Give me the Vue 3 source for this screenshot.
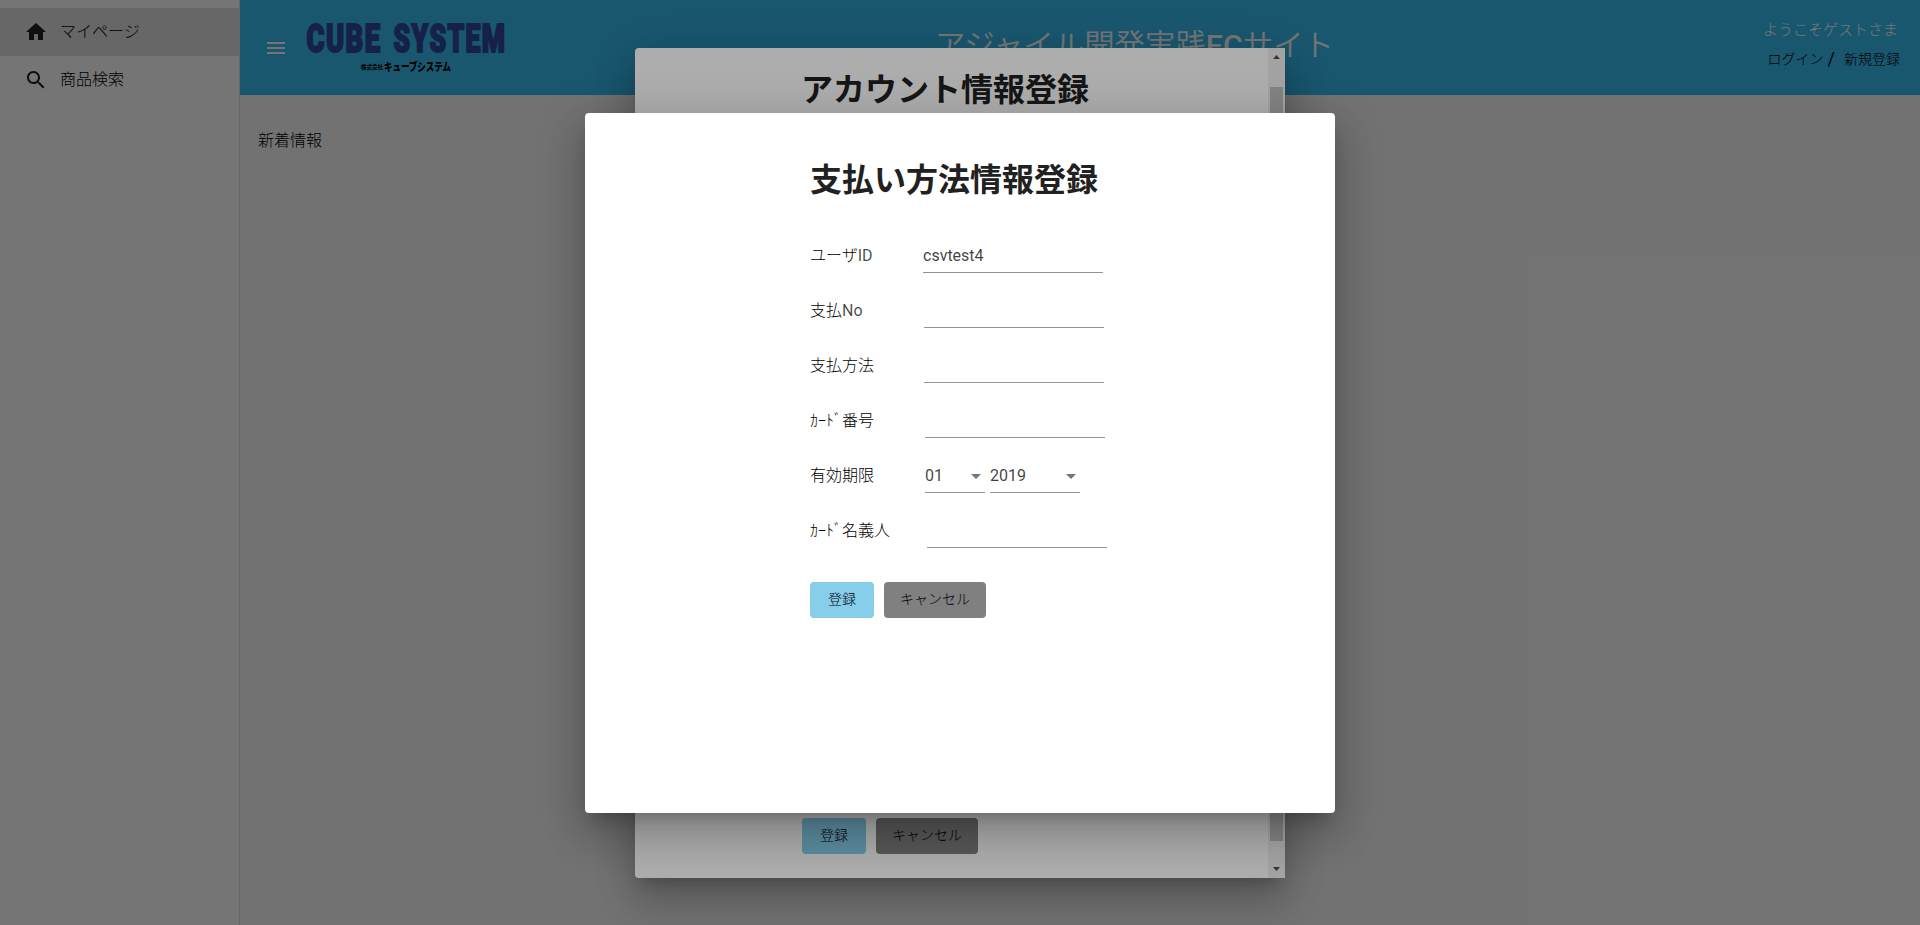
<script setup>
const navItems = [
  { label: 'マイページ', icon: 'M10 20v-6h4v6h5v-8h3L12 3 2 12h3v8z', active: true },
  {
    label: '商品検索',
    icon: 'M15.5 14h-.79l-.28-.27C15.41 12.59 16 11.11 16 9.5 16 5.91 13.09 3 9.5 3S3 5.91 3 9.5 5.91 16 9.5 16c1.61 0 3.09-.59 4.23-1.57l.27.28v.79l5 4.99L20.49 19l-4.99-5zm-6 0C7.01 14 5 11.99 5 9.5S7.01 5 9.5 5 14 7.01 14 9.5 11.99 14 9.5 14z',
    active: false
  }
]

const rows = [
  { label: 'ユーザ', latin: 'ID', indent: 113, fields: [{ value: 'csvtest4', width: 180 }] },
  { label: '支払', latin: 'No', indent: 114, fields: [{ value: '', width: 180 }] },
  { label: '支払方法', indent: 114, fields: [{ value: '', width: 180 }] },
  { label: 'ｶｰﾄﾞ番号', indent: 115, fields: [{ value: '', width: 180 }] },
  {
    label: '有効期限',
    indent: 115,
    fields: [
      { value: '01', width: 60, select: true },
      { value: '2019', width: 90, select: true }
    ]
  },
  { label: 'ｶｰﾄﾞ名義人', indent: 117, fields: [{ value: '', width: 180 }] }
]
</script>

<template>
  <div class="app">
    <nav class="sidenav">
      <a v-for="item in navItems" :key="item.label" class="nav-item" :class="{ active: item.active }">
        <svg viewBox="0 0 24 24" width="24" height="24"><path :d="item.icon" /></svg>
        <span>{{ item.label }}</span>
      </a>
    </nav>
    <div class="main">
      <header class="toolbar">
        <svg class="menu" viewBox="0 0 24 24" width="24" height="24">
          <path d="M3 18h18v-2H3v2zm0-5h18v-2H3v2zm0-7v2h18V6H3z" />
        </svg>
        <svg class="logo" width="260" height="80" viewBox="0 -18 260 80">
          <text class="logo-main" x="3.5" y="33.8" textLength="75" lengthAdjust="spacingAndGlyphs">CUBE</text>
          <text class="logo-main" x="90.5" y="33.8" textLength="113" lengthAdjust="spacingAndGlyphs">SYSTEM</text>
          <text class="logo-small" x="58" y="51" textLength="22" lengthAdjust="spacingAndGlyphs">株式会社</text>
          <text class="logo-sub" x="81" y="53" textLength="67" lengthAdjust="spacingAndGlyphs">キューブシステム</text>
        </svg>
        <div class="site-title">アジャイル開発実践<b>EC</b>サイト</div>
        <div class="account">
          <div class="welcome">ようこそゲストさま</div>
          <div class="links"><a>ログイン</a><span class="slash">/</span><a>新規登録</a></div>
        </div>
      </header>
      <main class="content">新着情報</main>
    </div>

    <div class="overlay">
      <section class="dialog account-dialog">
        <div class="dialog-body">
          <div class="form">
            <h1>アカウント情報登録</h1>
            <div class="actions">
              <button class="btn primary">登録</button>
              <button class="btn cancel">キャンセル</button>
            </div>
          </div>
        </div>
        <div class="scrollbar">
          <svg width="17" height="17" viewBox="0 0 17 17"><path d="M5 11h7L8.5 7z" /></svg>
          <div class="thumb"></div>
          <svg width="17" height="17" viewBox="0 0 17 17"><path d="M5 6h7l-3.5 4z" /></svg>
        </div>
      </section>
    </div>

    <div class="overlay">
      <section class="dialog payment-dialog">
        <div class="form">
          <h1>支払い方法情報登録</h1>
          <div v-for="row in rows" :key="row.label" class="row">
            <label :style="{ width: row.indent + 'px' }">{{ row.label }}<span v-if="row.latin" class="latin">{{ row.latin }}</span></label>
            <div v-for="(field, i) in row.fields" :key="i" class="field" :style="{ width: field.width + 'px' }">
              <span>{{ field.value }}</span>
              <i v-if="field.select" class="arrow"></i>
            </div>
          </div>
          <div class="actions">
            <button class="btn primary">登録</button>
            <button class="btn cancel">キャンセル</button>
          </div>
        </div>
      </section>
    </div>
  </div>
</template>

<style>
body {
  margin: 0;
  overflow: hidden;
}
</style>

<style scoped>
.app {
  position: relative;
  display: flex;
  height: 925px;
  overflow: hidden;
  background: #fafafa;
  color: #000;
  font-family: Roboto, "Noto Sans CJK JP", sans-serif;
  font-size: 16px;
  font-weight: 300;
}
.sidenav {
  box-sizing: border-box;
  width: 240px;
  padding-top: 8px;
  background: #fff;
  border-right: 1px solid #e0e0e0;
}
.nav-item {
  display: flex;
  align-items: center;
  gap: 12px;
  height: 48px;
  padding-left: 24px;
  line-height: 24px;
}
.nav-item span {
  padding-bottom: 1px;
}
.nav-item.active {
  background: #e0e0e0;
}
.nav-item svg {
  fill: #212121;
}
.main {
  flex: 1;
}
.toolbar {
  display: flex;
  box-sizing: border-box;
  height: 95px;
  padding: 0 20px 0 24px;
  background: #38bef2;
}
.menu {
  margin-top: 36px;
  fill: #fff;
}
.logo {
  margin: 0 0 0 15px;
  flex: none;
}
.logo-main {
  font: 900 38px Roboto, sans-serif;
  letter-spacing: 2px;
  fill: #2f4a9e;
  stroke: #2f4a9e;
  stroke-width: 2px;
}
.logo-small {
  font: 900 6px "Noto Sans CJK JP", sans-serif;
  fill: #000;
}
.logo-sub {
  font: 900 11.5px "Noto Sans CJK JP", sans-serif;
  fill: #000;
}
.site-title {
  margin: 24px 0 0 372px;
  font-size: 30.4px;
  line-height: 44px;
  color: #fff;
  white-space: nowrap;
  font-weight: 350;
}
.site-title b {
  font-weight: 500;
}
.account {
  margin-left: auto;
  display: flex;
  flex-direction: column;
  align-items: flex-end;
}
.welcome {
  margin: 18px 2px 0 0;
  font-size: 15px;
  line-height: 24px;
  color: #fff;
}
.links {
  display: flex;
  align-items: center;
  margin-top: 4px;
  height: 24px;
  font-size: 14px;
  color: #000;
}
.slash {
  margin: 0 9px 0 4px;
  font-size: 18px;
  font-weight: 400;
}
.content {
  padding: 34px 18px;
  line-height: 24px;
}
.overlay {
  position: absolute;
  inset: 0;
  display: flex;
  align-items: center;
  justify-content: center;
  background: rgba(0, 0, 0, 0.32);
}
.dialog {
  display: flex;
  box-sizing: border-box;
  background: #fff;
  border-radius: 4px;
  box-shadow: 0 11px 15px -7px rgba(0, 0, 0, 0.2), 0 24px 38px 3px rgba(0, 0, 0, 0.14),
    0 9px 46px 8px rgba(0, 0, 0, 0.12);
}
.account-dialog {
  width: 650px;
  height: 830px;
  margin-top: 1px;
}
.dialog-body {
  display: flex;
  flex: 1;
  padding-left: 167px;
}
.account-dialog .form {
  display: flex;
  flex-direction: column;
  justify-content: space-between;
  padding: 18px 0 24px;
}
.account-dialog h1 {
  margin-left: -1px;
}
.scrollbar {
  display: flex;
  flex-direction: column;
  width: 17px;
  background: #f1f1f1;
}
.scrollbar svg {
  fill: #505050;
}
.thumb {
  flex: 1;
  margin: 22px 2px 20px;
  background: #c1c1c1;
}
.payment-dialog {
  width: 750px;
  height: 700px;
  margin-top: 1px;
  justify-content: center;
  padding-top: 43px;
}
.form {
  width: 300px;
}
h1 {
  margin: 0;
  color: #212121;
  font-size: 32px;
  font-weight: 700;
  line-height: 48px;
  white-space: nowrap;
}
.payment-dialog h1 {
  margin-bottom: 36px;
}
.row {
  display: flex;
  height: 33px;
  margin-bottom: 22px;
  white-space: nowrap;
}
label {
  flex: none;
  line-height: 32px;
}
.latin {
  color: rgba(0, 0, 0, 0.72);
  font-weight: 400;
}
.field {
  display: flex;
  align-items: center;
  justify-content: space-between;
  box-sizing: border-box;
  flex: none;
  height: 33px;
  margin-right: 5px;
  border-bottom: 1px solid #949494;
  color: rgba(0, 0, 0, 0.75);
  font-weight: 400;
  line-height: 32px;
}
.arrow {
  margin-right: 4px;
  border: 5px solid transparent;
  border-top-color: #757575;
  border-bottom: 0;
}
.actions {
  display: flex;
  gap: 10px;
}
.payment-dialog .actions {
  padding-top: 12px;
}
.btn {
  height: 36px;
  padding: 0 16px 4px;
  border: 0;
  border-radius: 4px;
  color: #000;
  font: inherit;
  font-size: 14px;
  white-space: nowrap;
}
.primary {
  width: 64px;
  background: #87ceeb;
}
.cancel {
  width: 102px;
  background: #808080;
}
</style>
